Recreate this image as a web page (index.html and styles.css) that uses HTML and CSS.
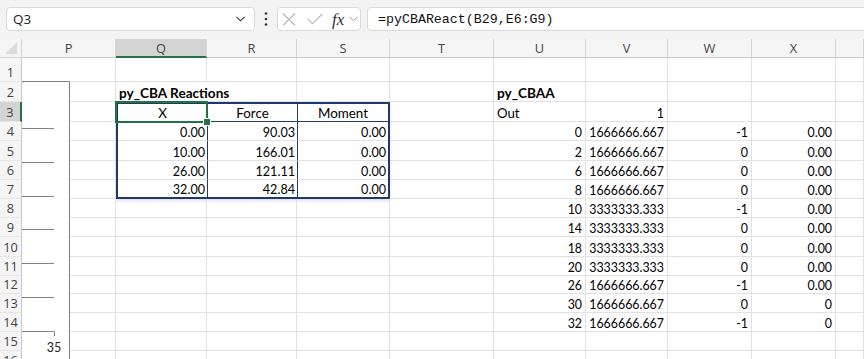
FILE: index.html
```html
<!DOCTYPE html>
<html lang="en">
<head>
    <meta charset="UTF-8">
    <title>py_CBA Reactions</title>
    <link rel="stylesheet" href="styles.css">
</head>
<body>
    <div class="toolbar">
        <div class="namebox">
            <span>Q3</span>
            <svg width="9" height="6" viewBox="0 0 9 6"><path d="M0.5 0.8L4.5 4.8L8.5 0.8" stroke="#333" stroke-width="1.1" fill="none"/></svg>
        </div>
        <div class="more">
            <svg width="4" height="14" viewBox="0 0 4 14"><circle cx="2" cy="1.5" r="1.3" fill="#333"/><circle cx="2" cy="7" r="1.3" fill="#333"/><circle cx="2" cy="12.5" r="1.3" fill="#333"/></svg>
        </div>
        <div class="fxbox">
            <svg class="ico-cancel" width="14" height="13" viewBox="0 0 14 13"><path d="M1 0.5L13 12.5M13 0.5L1 12.5" stroke="#b8b8b8" stroke-width="1.1"/></svg>
            <svg class="ico-ok" width="16" height="12" viewBox="0 0 16 12"><path d="M0.8 6L5.6 10.8L15.2 1" stroke="#b8b8b8" stroke-width="1.1" fill="none"/></svg>
            <span class="fx">fx</span>
            <svg class="ico-drop" width="9" height="6" viewBox="0 0 9 6"><path d="M0.5 0.8L4.5 4.8L8.5 0.8" stroke="#999" stroke-width="1" fill="none"/></svg>
        </div>
        <div class="formula">=pyCBAReact(B29,E6:G9)</div>
    </div>

    <div class="sheet">
        <!-- column headers -->
        <div class="corner"></div><div class="ch">P</div><div class="ch sel">Q</div><div class="ch">R</div><div class="ch">S</div><div class="ch">T</div><div class="ch">U</div><div class="ch">V</div><div class="ch">W</div><div class="ch">X</div><div class="ch"></div>

        <!-- py_CBA Reactions table, Q3:S7 -->
        <div class="rx">
            <div class="th active">X</div><div class="th">Force</div><div class="th">Moment</div>
            <div class="td">0.00</div><div class="td">90.03</div><div class="td">0.00</div>
            <div class="td">10.00</div><div class="td">166.01</div><div class="td">0.00</div>
            <div class="td">26.00</div><div class="td">121.11</div><div class="td">0.00</div>
            <div class="td">32.00</div><div class="td">42.84</div><div class="td">0.00</div>
        </div>

        <div class="rh">1</div><div class="c"></div><div class="c"></div><div class="c"></div><div class="c"></div><div class="c"></div><div class="c"></div><div class="c"></div><div class="c"></div><div class="c"></div><div class="c"></div>
        <div class="rh">2</div><div class="c"></div><div class="c b wide">py_CBA Reactions</div><div class="c"></div><div class="c"></div><div class="c b">py_CBAA</div><div class="c"></div><div class="c"></div><div class="c"></div><div class="c"></div>
        <div class="rh sel">3</div><div class="c"></div><div class="c"></div><div class="c t">Out</div><div class="c n">1</div><div class="c"></div><div class="c"></div><div class="c"></div>
        <div class="rh">4</div><div class="c"></div><div class="c"></div><div class="c n">0</div><div class="c n">1666666.667</div><div class="c n">-1</div><div class="c n">0.00</div><div class="c"></div>
        <div class="rh">5</div><div class="c"></div><div class="c"></div><div class="c n">2</div><div class="c n">1666666.667</div><div class="c n">0</div><div class="c n">0.00</div><div class="c"></div>
        <div class="rh">6</div><div class="c"></div><div class="c"></div><div class="c n">6</div><div class="c n">1666666.667</div><div class="c n">0</div><div class="c n">0.00</div><div class="c"></div>
        <div class="rh">7</div><div class="c"></div><div class="c"></div><div class="c n">8</div><div class="c n">1666666.667</div><div class="c n">0</div><div class="c n">0.00</div><div class="c"></div>
        <div class="rh">8</div><div class="c"></div><div class="c"></div><div class="c"></div><div class="c"></div><div class="c"></div><div class="c n">10</div><div class="c n">3333333.333</div><div class="c n">-1</div><div class="c n">0.00</div><div class="c"></div>
        <div class="rh">9</div><div class="c"></div><div class="c"></div><div class="c"></div><div class="c"></div><div class="c"></div><div class="c n">14</div><div class="c n">3333333.333</div><div class="c n">0</div><div class="c n">0.00</div><div class="c"></div>
        <div class="rh">10</div><div class="c"></div><div class="c"></div><div class="c"></div><div class="c"></div><div class="c"></div><div class="c n">18</div><div class="c n">3333333.333</div><div class="c n">0</div><div class="c n">0.00</div><div class="c"></div>
        <div class="rh">11</div><div class="c"></div><div class="c"></div><div class="c"></div><div class="c"></div><div class="c"></div><div class="c n">20</div><div class="c n">3333333.333</div><div class="c n">0</div><div class="c n">0.00</div><div class="c"></div>
        <div class="rh">12</div><div class="c"></div><div class="c"></div><div class="c"></div><div class="c"></div><div class="c"></div><div class="c n">26</div><div class="c n">1666666.667</div><div class="c n">-1</div><div class="c n">0.00</div><div class="c"></div>
        <div class="rh">13</div><div class="c"></div><div class="c"></div><div class="c"></div><div class="c"></div><div class="c"></div><div class="c n">30</div><div class="c n">1666666.667</div><div class="c n">0</div><div class="c n">0</div><div class="c"></div>
        <div class="rh">14</div><div class="c"></div><div class="c"></div><div class="c"></div><div class="c"></div><div class="c"></div><div class="c n">32</div><div class="c n">1666666.667</div><div class="c n">-1</div><div class="c n">0</div><div class="c"></div>
        <div class="rh">15</div><div class="c"></div><div class="c"></div><div class="c"></div><div class="c"></div><div class="c"></div><div class="c"></div><div class="c"></div><div class="c"></div><div class="c"></div><div class="c"></div>
        <div class="rh">16</div><div class="c"></div><div class="c"></div><div class="c"></div><div class="c"></div><div class="c"></div><div class="c"></div><div class="c"></div><div class="c"></div><div class="c"></div><div class="c"></div>

        <!-- chart object sitting over column P -->
        <svg class="chart" width="48" height="278" viewBox="0 0 48 278">
            <rect x="0" y="0" width="47" height="278" fill="#fff"/>
            <path d="M0 0.5H47.5V278" stroke="#808080" fill="none"/>
            <path d="M0 47.5H32M0 81.5H32M0 115.5H32M0 148.5H32M0 182.5H32M0 216.5H32M0 250.5H32.5V255" stroke="#808080" fill="none"/>
            <text x="32" y="271" text-anchor="middle" class="axis">35</text>
        </svg>
    </div>
</body>
</html>
```

FILE: styles.css
```css
:root {
    --grid: #e1e1e1;
    --head-bg: #f5f5f5;
    --head-line: #d6d6d6;
    --sel-bg: #d4d4d4;
    --green: #217346;
    --navy: #1f3a68;
}

* {
    box-sizing: border-box;
}

body {
    margin: 0;
    width: 864px;
    height: 359px;
    overflow: hidden;
    background: #fff;
    color: #000;
    font-family: 'Lato', sans-serif;
}

/* formula bar */
.toolbar {
    display: flex;
    align-items: center;
    height: 39px;
    padding: 0 0 1px 6px;
    background: #f3f3f3;
}

.namebox {
    display: flex;
    align-items: center;
    justify-content: space-between;
    width: 249px;
    height: 24px;
    padding: 0 9px 0 6px;
    background: #fff;
    border: 1px solid #dadada;
    border-radius: 4px;
    font-family: 'Open Sans', sans-serif;
    font-size: 13.5px;
    color: #222;
}

.more {
    display: flex;
    justify-content: center;
    width: 22px;
}

.fxbox {
    display: flex;
    align-items: center;
    width: 84px;
    height: 24px;
    padding-left: 4px;
    background: #fff;
    border: 1px solid #dadada;
    border-radius: 4px;
}

.ico-ok {
    margin-left: 11px;
}

.fx {
    margin-left: 9px;
    font-family: 'Liberation Serif', serif;
    font-style: italic;
    font-size: 17px;
    color: #333;
    line-height: 1;
}

.ico-drop {
    margin-left: 5px;
}

.formula {
    display: flex;
    align-items: center;
    flex: 1;
    height: 24px;
    margin: 0 -10px 0 6px;
    padding: 0 10px;
    background: #fff;
    border: 1px solid #dadada;
    border-radius: 4px;
    font-family: 'Liberation Mono', monospace;
    font-size: 13.3px;
    color: #111;
}

/* worksheet grid */
.sheet {
    position: relative;
    display: grid;
    grid-template-columns: 22px 94px 91px 90px 93px 104px 92px 82px 84px 84px 28px;
    grid-template-rows: 19px 24px 20px 20px 19px 20px 19px 19px 19px 19px 20px 19px 18px 19px 19px 19px 19px;
}

.corner {
    display: flex;
    align-items: flex-end;
    justify-content: flex-end;
    padding: 0 4px 3px 0;
    background: var(--head-bg);
    border-right: 1px solid var(--head-line);
    border-bottom: 1px solid var(--head-line);
}

.corner::after {
    content: "";
    border-left: 12px solid transparent;
    border-bottom: 12px solid #dcdcdc;
}

.ch {
    display: flex;
    align-items: center;
    justify-content: center;
    background: var(--head-bg);
    border-right: 1px solid var(--head-line);
    border-bottom: 1px solid #c8c8c8;
    font-family: 'Open Sans', sans-serif;
    font-size: 12.8px;
    color: #444;
}

.ch.sel {
    background: var(--sel-bg);
    border-bottom: 2px solid var(--green);
}

.rh {
    display: flex;
    align-items: flex-end;
    justify-content: center;
    background: var(--head-bg);
    border-right: 1px solid #c8c8c8;
    border-bottom: 1px solid #e6e6e6;
    font-family: 'Open Sans', sans-serif;
    font-size: 12.8px;
    line-height: 18px;
    color: #444;
}

.rh.sel {
    background: var(--sel-bg);
    border-right: 2px solid var(--green);
}

.c {
    display: flex;
    align-items: flex-end;
    padding: 0 3px;
    border-right: 1px solid var(--grid);
    border-bottom: 1px solid var(--grid);
    font-size: 12.4px;
    line-height: 15px;
    white-space: nowrap;
}

.n {
    justify-content: flex-end;
}

.t {
    font-size: 13.2px;
}

.b {
    font-weight: 700;
    font-size: 13.6px;
}

.wide {
    grid-column: span 2;
}

/* excel table */
.rx {
    grid-column: 3 / 6;
    grid-row: 4 / 9;
    display: grid;
    grid-template-columns: 90px 90px 90px;
    grid-template-rows: 18px 19px 20px 19px 17px;
    border: 2px solid var(--navy);
    box-shadow: 0 2px 3px rgba(90, 70, 160, 0.18);
    background: #fff;
    font-size: 12.6px;
    line-height: 15px;
}

.th,
.td {
    display: flex;
    align-items: flex-end;
    padding: 0 2px;
    border-right: 1px solid var(--navy);
    white-space: nowrap;
}

.th:nth-child(3n),
.td:nth-child(3n) {
    border-right: 0;
}

.th {
    justify-content: center;
    border-bottom: 1px solid var(--navy);
    font-size: 13.4px;
}

.td {
    justify-content: flex-end;
    border-bottom: 1px solid var(--grid);
}

.td:nth-last-child(-n+3) {
    border-bottom: 0;
}

.active {
    position: relative;
}

.active::before {
    content: "";
    position: absolute;
    top: -3px;
    left: -3px;
    right: -1px;
    bottom: -2px;
    border: 2px solid var(--green);
}

.active::after {
    content: "";
    position: absolute;
    right: -4px;
    bottom: -5px;
    width: 6px;
    height: 6px;
    background: var(--green);
    border: 1px solid #fff;
}

.chart {
    position: absolute;
    left: 22px;
    top: 42px;
}

.axis {
    font-family: 'Lato', sans-serif;
    font-size: 12.5px;
    fill: #222;
}
```
